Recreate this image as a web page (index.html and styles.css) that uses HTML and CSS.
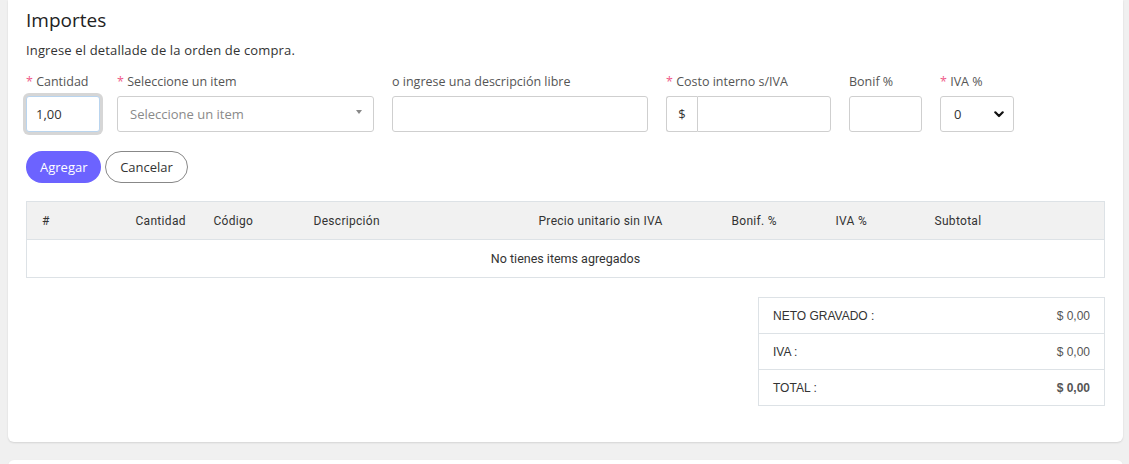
FILE: index.html
```html
<!DOCTYPE html>
<html lang="es">
<head>
    <meta charset="UTF-8">
    <meta name="viewport" content="width=device-width, initial-scale=1.0">
    <title>Importes</title>
    <link rel="stylesheet" href="styles.css">
</head>
<body>
    <div class="card">
        <h2 class="card-title">Importes</h2>
        <p class="card-subtitle">Ingrese el detallade de la orden de compra.</p>

        <div class="fields">
            <div class="field field-qty">
                <label><span class="req">*</span> Cantidad</label>
                <input type="text" class="control control-focus" value="1,00">
            </div>
            <div class="field field-item">
                <label><span class="req">*</span> Seleccione un item</label>
                <div class="control select2">
                    <span class="placeholder">Seleccione un item</span>
                    <span class="caret"></span>
                </div>
            </div>
            <div class="field field-desc">
                <label>o ingrese una descripción libre</label>
                <input type="text" class="control">
            </div>
            <div class="field field-cost">
                <label><span class="req">*</span> Costo interno s/IVA</label>
                <div class="input-group">
                    <span class="addon">$</span>
                    <input type="text" class="control">
                </div>
            </div>
            <div class="field field-bonif">
                <label>Bonif %</label>
                <input type="text" class="control">
            </div>
            <div class="field field-iva">
                <label><span class="req">*</span> IVA %</label>
                <div class="control select">
                    <span>0</span>
                    <svg width="10" height="7" viewBox="0 0 10 7"><path d="M1.3 1.3 L5 5 L8.7 1.3" fill="none" stroke="#111" stroke-width="2.2" stroke-linecap="round" stroke-linejoin="round"/></svg>
                </div>
            </div>
        </div>

        <div class="actions">
            <button class="btn btn-primary">Agregar</button>
            <button class="btn btn-outline">Cancelar</button>
        </div>

        <table class="items">
            <colgroup>
                <col style="width: 94px">
                <col style="width: 78px">
                <col style="width: 100px">
                <col style="width: 225px">
                <col style="width: 193px">
                <col style="width: 104px">
                <col style="width: 99px">
                <col>
            </colgroup>
            <thead>
                <tr>
                    <th>#</th>
                    <th>Cantidad</th>
                    <th>Código</th>
                    <th>Descripción</th>
                    <th>Precio unitario sin IVA</th>
                    <th>Bonif. %</th>
                    <th>IVA %</th>
                    <th>Subtotal</th>
                </tr>
            </thead>
            <tbody>
                <tr>
                    <td colspan="8" class="empty">No tienes items agregados</td>
                </tr>
            </tbody>
        </table>

        <div class="totals-wrap">
            <table class="totals">
                <tr><td>NETO GRAVADO :</td><td class="amount">$ 0,00</td></tr>
                <tr><td>IVA :</td><td class="amount">$ 0,00</td></tr>
                <tr class="total"><td>TOTAL :</td><td class="amount">$ 0,00</td></tr>
            </table>
        </div>
    </div>

    <div class="card card-next"></div>
</body>
</html>
```

FILE: styles.css
```css
:root {
    --page-bg: #f0f0f0;
    --card-bg: #ffffff;
    --border-color: #cfcfcf;
    --table-border: #dde2e6;
    --text-color: #333;
    --label-color: #555;
    --primary: #6c63ff;
    --required: #ef5b8a;
}

body {
    margin: 0;
    padding: 0;
    background: var(--page-bg);
    font-family: "Open Sans", "Noto Sans", sans-serif;
    color: var(--text-color);
    overflow: hidden;
}

.card {
    margin: 0 6px 0 8px;
    padding: 0 18px 36px 18px;
    background: var(--card-bg);
    border-radius: 0 0 6px 6px;
    box-shadow: 0 1px 2px rgba(0, 0, 0, 0.12);
}

.card-next {
    margin-top: 18px;
    height: 20px;
    padding: 0;
    border-radius: 6px 6px 0 0;
}

.card-title {
    margin: 0;
    padding-top: 7px;
    font-size: 19px;
    line-height: 26px;
    font-weight: 500;
    color: #222;
}

.card-subtitle {
    margin: 8px 0 0;
    font-size: 13px;
    letter-spacing: 0.15px;
    line-height: 18px;
    color: #333;
}

.fields {
    display: flex;
    margin-top: 14px;
}

.field {
    display: flex;
    flex-direction: column;
    margin-right: 18px;
}

.field label {
    font-size: 12.5px;
    line-height: 17px;
    color: var(--label-color);
    margin-bottom: 6px;
    white-space: nowrap;
}

.req {
    color: var(--required);
}

.field-qty { width: 74px; margin-right: 17px; }
.field-item { width: 257px; }
.field-desc { width: 256px; }
.field-cost { width: 165px; }
.field-bonif { width: 73px; }
.field-iva { width: 74px; margin-right: 0; }

.control {
    box-sizing: border-box;
    height: 36px;
    width: 100%;
    border: 1px solid var(--border-color);
    border-radius: 3px;
    background: #fff;
    font-family: inherit;
    font-size: 13px;
    color: #333;
    padding: 0 10px;
    outline: none;
}

.control-focus {
    border-color: #b9d4ee;
    box-shadow: 0 0 0 3px #d6d6d6;
    border-radius: 3px;
    padding-left: 9px;
}

.select2 {
    display: flex;
    align-items: center;
    justify-content: space-between;
    padding: 0 11px 0 12px;
}

.placeholder {
    color: #8a8a8a;
    font-size: 13px;
}

.caret {
    width: 0;
    height: 0;
    border-left: 3px solid transparent;
    border-right: 3px solid transparent;
    border-top: 4px solid #888;
    margin-top: -4px;
}

.select {
    display: flex;
    align-items: center;
    justify-content: space-between;
    padding: 0 9px 0 13px;
}

.input-group {
    display: flex;
    height: 36px;
}

.addon {
    box-sizing: border-box;
    width: 31px;
    display: flex;
    align-items: center;
    justify-content: center;
    border: 1px solid var(--border-color);
    border-right: none;
    border-radius: 3px 0 0 3px;
    font-size: 13px;
    color: #333;
}

.input-group .control {
    flex: 1;
    border-radius: 0 3px 3px 0;
}

.actions {
    display: flex;
    gap: 4px;
    margin-top: 19px;
}

.btn {
    height: 32px;
    border-radius: 16px;
    font-family: inherit;
    font-size: 13px;
    padding: 0 14px;
    cursor: pointer;
}

.btn-primary {
    background: var(--primary);
    color: #fff;
    border: none;
    width: 75px;
}

.btn-outline {
    background: #fff;
    color: #333;
    border: 1px solid #888;
    width: 83px;
}

.items {
    width: 100%;
    margin-top: 18px;
    border-collapse: collapse;
    table-layout: fixed;
    font-family: Roboto, "Liberation Sans", sans-serif;
    font-size: 12px;
    color: #333;
}

.items th {
    text-align: left;
    font-weight: 400;
    letter-spacing: 0.3px;
    background: #f1f1f1;
    height: 37px;
    padding: 0 0 0 15px;
    border-top: 1px solid var(--table-border);
    border-bottom: 1px solid var(--table-border);
    white-space: nowrap;
}

.items th:first-child { border-left: 1px solid var(--table-border); }
.items th:last-child { border-right: 1px solid var(--table-border); }

.items td.empty {
    text-align: center;
    height: 37px;
    padding: 0;
    border: 1px solid var(--table-border);
    border-top: none;
    font-size: 12.5px;
}

.totals-wrap {
    display: flex;
    justify-content: flex-end;
    margin-top: 19px;
}

.totals {
    width: 347px;
    border-collapse: collapse;
    font-family: "Liberation Sans", Arial, sans-serif;
    font-size: 12px;
    color: #333;
}

.totals td {
    height: 35px;
    padding: 0 14px;
    border: 1px solid var(--table-border);
}

.totals td:first-child { border-right: none; }
.totals td.amount {
    text-align: right;
    border-left: none;
    color: #555;
}

.totals .total td.amount {
    font-weight: bold;
}
```
